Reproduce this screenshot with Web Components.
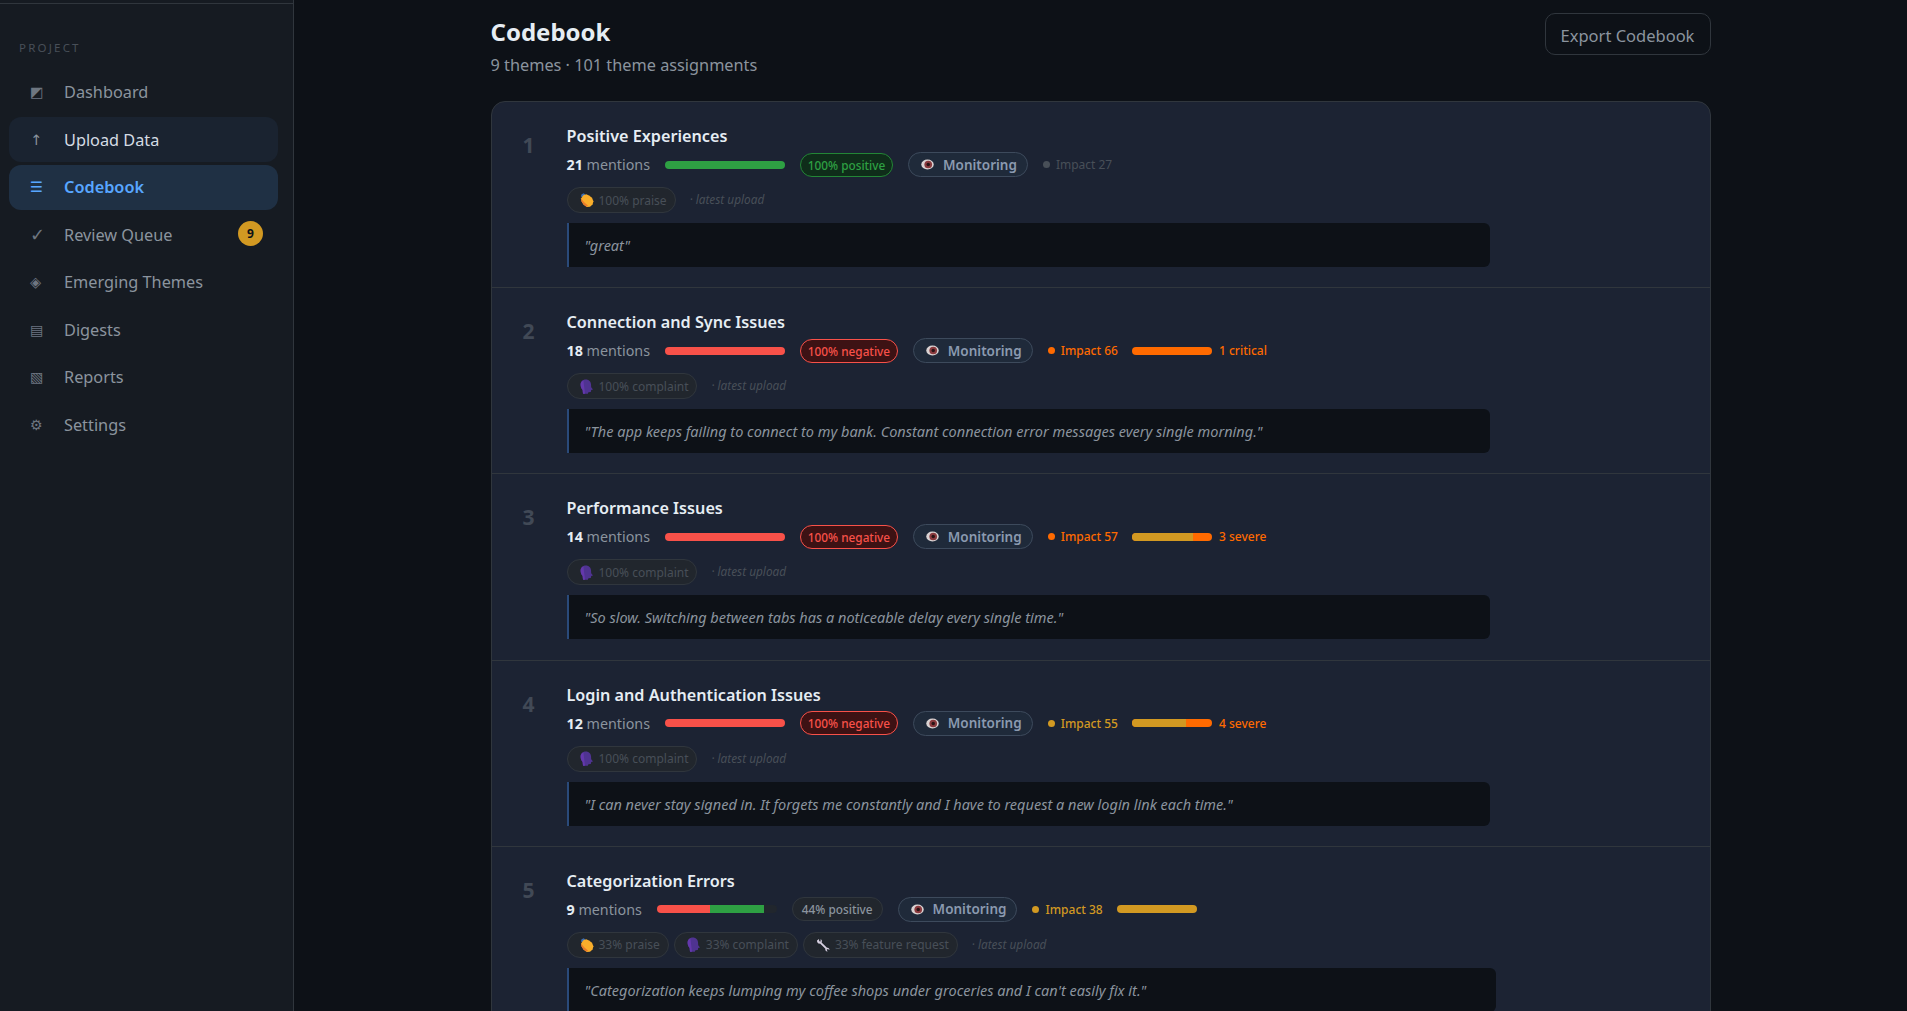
<!DOCTYPE html>
<html lang="en">
<head>
<meta charset="utf-8">
<title>Codebook</title>
<style>
    html, body { height: 100%; margin: 0; overflow: hidden; background: #0d1117; }
    body { font-family: "Noto Sans", "Open Sans", sans-serif; color: #e6edf3; }
</style>
</head>
<body>
<app-shell>
    <side-nav slot="nav">
        <nav-item glyph="◩">Dashboard</nav-item>
        <nav-item glyph="↑" state="hover">Upload Data</nav-item>
        <nav-item glyph="☰" state="active">Codebook</nav-item>
        <nav-item glyph="✓" badge="9">Review Queue</nav-item>
        <nav-item glyph="◈">Emerging Themes</nav-item>
        <nav-item glyph="▤">Digests</nav-item>
        <nav-item glyph="▧">Reports</nav-item>
        <nav-item glyph="⚙">Settings</nav-item>
    </side-nav>

    <page-head heading="Codebook" sub="9 themes · 101 theme assignments" action="Export Codebook"></page-head>

    <theme-list>
        <theme-row rank="1" heading="Positive Experiences" quote="&quot;great&quot;">
            <mention-bar slot="meta" count="21" pos="100"></mention-bar>
            <tone-pill slot="meta" tone="positive">100% positive</tone-pill>
            <monitor-pill slot="meta"></monitor-pill>
            <impact-meter slot="meta" score="27" level="low"></impact-meter>
            <kind-chip slot="chips" icon="clap">100% praise</kind-chip>
        </theme-row>
        <theme-row rank="2" heading="Connection and Sync Issues" quote="&quot;The app keeps failing to connect to my bank. Constant connection error messages every single morning.&quot;">
            <mention-bar slot="meta" count="18" neg="100"></mention-bar>
            <tone-pill slot="meta" tone="negative">100% negative</tone-pill>
            <monitor-pill slot="meta"></monitor-pill>
            <impact-meter slot="meta" score="66" level="high" amber="0" note="1 critical"></impact-meter>
            <kind-chip slot="chips" icon="speak">100% complaint</kind-chip>
        </theme-row>
        <theme-row rank="3" heading="Performance Issues" quote="&quot;So slow. Switching between tabs has a noticeable delay every single time.&quot;">
            <mention-bar slot="meta" count="14" neg="100"></mention-bar>
            <tone-pill slot="meta" tone="negative">100% negative</tone-pill>
            <monitor-pill slot="meta"></monitor-pill>
            <impact-meter slot="meta" score="57" level="high" amber="76" note="3 severe"></impact-meter>
            <kind-chip slot="chips" icon="speak">100% complaint</kind-chip>
        </theme-row>
        <theme-row rank="4" heading="Login and Authentication Issues" quote="&quot;I can never stay signed in. It forgets me constantly and I have to request a new login link each time.&quot;">
            <mention-bar slot="meta" count="12" neg="100"></mention-bar>
            <tone-pill slot="meta" tone="negative">100% negative</tone-pill>
            <monitor-pill slot="meta"></monitor-pill>
            <impact-meter slot="meta" score="55" level="mid" amber="67" note="4 severe"></impact-meter>
            <kind-chip slot="chips" icon="speak">100% complaint</kind-chip>
        </theme-row>
        <theme-row rank="5" heading="Categorization Errors" wide quote="&quot;Categorization keeps lumping my coffee shops under groceries and I can't easily fix it.&quot;">
            <mention-bar slot="meta" count="9" neg="44.5" pos="45"></mention-bar>
            <tone-pill slot="meta" tone="mixed">44% positive</tone-pill>
            <monitor-pill slot="meta"></monitor-pill>
            <impact-meter slot="meta" score="38" level="mid" amber="100"></impact-meter>
            <kind-chip slot="chips" icon="clap">33% praise</kind-chip>
            <kind-chip slot="chips" icon="speak">33% complaint</kind-chip>
            <kind-chip slot="chips" icon="wrench">33% feature request</kind-chip>
        </theme-row>
    </theme-list>
</app-shell>

<script>
// small colour icons used in the pills and chips
const ICONS = {
    clap: `<svg width="14" height="14" viewBox="0 0 14 14">
        <path d="M1.4 1.6 3.6.2 5.4 1.6 2.8 4.6 1 3.6z" fill="#3f6fb0"/>
        <path d="M1 5.4 3.4 2.2 6.2 1.2 9 2.4l3 2.4 1.4 3.4-.8 3.2-2.6 2.4-3.2.2-3.2-2.2L1.6 8.4z" fill="#f9ae2b"/>
        <path d="M6.6 13.8 3.6 11.6 1.6 8.4 1 5.4 4.4 9.4 8 12.4z" fill="#ea7a2c"/>
    </svg>`,
    speak: `<svg width="14" height="15" viewBox="0 0 14 15">
        <path d="M.6 5.4C.6 2.2 3.2.4 6 .4c2.8 0 4.8 2.2 5 4.6l.2 3.2 1.8 2.2-1.8.6-.4 2-2.4.2-.6 1.6H3L2.6 11C1.2 9.4.6 7.6.6 5.4z" fill="#4f3391"/>
        <path d="M3 14.8 2.6 11C1.2 9.4.6 7.6.6 5.4.6 3.6 1.6 2 3.4 1.2L5 14.8z" fill="#6438ac"/>
    </svg>`,
    wrench: `<svg width="14" height="14" viewBox="0 0 14 14">
        <path d="M1 2.4 3 1 3.2 3.2 4.6 3.4 4.6 1.2C6 1.6 6.2 3.2 5.6 4.4L11 9.8C12.4 9.4 13.6 10.4 13.4 12L11.8 11 10.6 11.8 11.6 13.4C10 13.6 8.8 12.2 9.4 10.8L4 5.6C2.4 6 .8 4.4 1 2.4z" fill="#d6cfe0"/>
    </svg>`,
    eye: `<svg width="13" height="11" viewBox="0 0 14 12">
        <ellipse cx="7" cy="6" rx="6.8" ry="5.4" fill="#d9d2d2"/>
        <circle cx="7.8" cy="6" r="4.2" fill="#8a3a3e"/>
        <circle cx="7.8" cy="6" r="1.9" fill="#2a1416"/>
    </svg>`
};

const shellTemplate = document.createElement('template');
shellTemplate.innerHTML = `
    <style>
        :host { display: flex; height: 100%; }
        #main { flex: 1; min-width: 0; overflow: hidden; display: flex; flex-direction: column; align-items: center; }
        #column { width: 1220px; }
    </style>
    <slot name="nav"></slot>
    <div id="main"><div id="column"><slot></slot></div></div>
`;

class AppShell extends HTMLElement {
    constructor() {
        super();
        this.attachShadow({ mode: 'open' });
        this.shadowRoot.appendChild(shellTemplate.content.cloneNode(true));
    }
}

const sideTemplate = document.createElement('template');
sideTemplate.innerHTML = `
    <style>
        :host {
            display: block;
            flex: none;
            width: 293px;
            height: 100%;
            background: #161b22;
            border-right: 1px solid #30363d;
        }
        #top { height: 3px; border-bottom: 1px solid #30363d; }
        #label {
            margin: 35.5px 0 14px 19px;
            font-size: 11.5px;
            line-height: 16px;
            letter-spacing: 2.2px;
            color: #484f58;
        }
        #items { padding: 0 15px 0 9px; display: flex; flex-direction: column; gap: 2.5px; }
    </style>
    <div id="top"></div>
    <div id="label">PROJECT</div>
    <div id="items"><slot></slot></div>
`;

class SideNav extends HTMLElement {
    constructor() {
        super();
        this.attachShadow({ mode: 'open' });
        this.shadowRoot.appendChild(sideTemplate.content.cloneNode(true));
    }
}

const navTemplate = document.createElement('template');
navTemplate.innerHTML = `
    <style>
        :host {
            display: flex;
            align-items: center;
            height: 45px;
            padding: 0 15px 0 21px;
            border-radius: 12px;
            font-size: 16.3px;
            color: #8b949e;
        }
        :host([state="hover"]) { background: #1a2330; color: #d5dce4; }
        :host([state="active"]) { background: #1f3044; color: #58a6ff; font-weight: 600; }
        #glyph { width: 34px; flex: none; font-family: "DejaVu Sans", sans-serif; font-size: 14.5px; color: #6e7681; }
        :host([glyph="✓"]) #glyph { font-size: 18px; }
        :host([state="hover"]) #glyph { color: #8b949e; }
        :host([state="active"]) #glyph { color: #58a6ff; }
        #text { flex: 1; }
        #badge {
            width: 25px;
            height: 25px;
            border-radius: 50%;
            background: #d29922;
            color: #0d1117;
            font-size: 12px;
            font-weight: 700;
            display: flex;
            align-items: center;
            justify-content: center;
            margin-top: -2px;
        }
    </style>
    <span id="glyph"></span>
    <span id="text"><slot></slot></span>
`;

class NavItem extends HTMLElement {
    constructor() {
        super();
        this.attachShadow({ mode: 'open' });
        this.shadowRoot.appendChild(navTemplate.content.cloneNode(true));
        this.shadowRoot.querySelector('#glyph').textContent = this.getAttribute('glyph');
        if (this.hasAttribute('badge')) {
            const badge = document.createElement('span');
            badge.id = 'badge';
            badge.textContent = this.getAttribute('badge');
            this.shadowRoot.appendChild(badge);
        }
    }
}

const headTemplate = document.createElement('template');
headTemplate.innerHTML = `
    <style>
        :host {
            display: flex;
            justify-content: space-between;
            align-items: flex-start;
            padding-top: 13px;
            margin-bottom: 23px;
        }
        h1 { margin: 0; font-size: 24px; line-height: 38px; font-weight: 700; color: #e6edf3; }
        p { margin: 1px 0 0; font-size: 16.3px; line-height: 26px; color: #8b949e; }
        button {
            height: 42px;
            width: 166px;
            padding: 2px 0 0;
            border: 1px solid #30363d;
            border-radius: 10px;
            background: transparent;
            color: #8b949e;
            font: 16.5px "Noto Sans", sans-serif;
        }
    </style>
    <div>
        <h1></h1>
        <p></p>
    </div>
    <button></button>
`;

class PageHead extends HTMLElement {
    constructor() {
        super();
        this.attachShadow({ mode: 'open' });
        this.shadowRoot.appendChild(headTemplate.content.cloneNode(true));
        this.shadowRoot.querySelector('h1').innerText = this.getAttribute('heading');
        this.shadowRoot.querySelector('p').innerText = this.getAttribute('sub');
        this.shadowRoot.querySelector('button').innerText = this.getAttribute('action');
    }
}

const listTemplate = document.createElement('template');
listTemplate.innerHTML = `
    <style>
        :host {
            display: block;
            background: #1c2333;
            border: 1px solid #30363d;
            border-radius: 14px;
            overflow: hidden;
        }
    </style>
    <slot></slot>
`;

class ThemeList extends HTMLElement {
    constructor() {
        super();
        this.attachShadow({ mode: 'open' });
        this.shadowRoot.appendChild(listTemplate.content.cloneNode(true));
    }
}

const rowTemplate = document.createElement('template');
rowTemplate.innerHTML = `
    <style>
        :host {
            display: flex;
            height: 186.2px;
            box-sizing: border-box;
            padding: 21px 0 0 18px;
            border-bottom: 1px solid #30363d;
        }
        #rank {
            flex: none;
            width: 38px;
            margin: 7px 19px 0 0;
            text-align: center;
            font-size: 21px;
            line-height: 30px;
            font-weight: 700;
            color: #414956;
        }
        #body { flex: 1; min-width: 0; }
        h3 { margin: 0 0 3px; font-size: 16.2px; line-height: 26px; font-weight: 600; color: #e6edf3; }
        #meta { display: flex; align-items: center; gap: 15px; height: 25px; margin-bottom: 10px; }
        #chips { display: flex; align-items: center; gap: 5px; height: 26px; margin-bottom: 10px; }
        #latest { margin-left: 9px; font-size: 11.8px; font-style: italic; color: #484f58; position: relative; top: -1px; }
        blockquote {
            box-sizing: border-box;
            width: 923px;
            height: 44px;
            margin: 0;
            padding: 0 16px;
            display: flex;
            align-items: center;
            background: #0d1117;
            border-left: 2px solid #2a4a7a;
            border-radius: 0 6px 6px 0;
            font-size: 14.5px;
            font-style: italic;
            color: #8b949e;
        }
        :host([wide]) blockquote { width: 929px; }
    </style>
    <div id="rank"></div>
    <div id="body">
        <h3></h3>
        <div id="meta"><slot name="meta"></slot></div>
        <div id="chips"><slot name="chips"></slot><span id="latest">· latest upload</span></div>
        <blockquote></blockquote>
    </div>
`;

class ThemeRow extends HTMLElement {
    constructor() {
        super();
        this.attachShadow({ mode: 'open' });
        this.shadowRoot.appendChild(rowTemplate.content.cloneNode(true));
        this.shadowRoot.querySelector('#rank').textContent = this.getAttribute('rank');
        this.shadowRoot.querySelector('h3').textContent = this.getAttribute('heading');
        this.shadowRoot.querySelector('blockquote').textContent = this.getAttribute('quote');
    }
}

const barTemplate = document.createElement('template');
barTemplate.innerHTML = `
    <style>
        :host { display: flex; align-items: center; gap: 15px; font-size: 14.3px; color: #8b949e; }
        b { color: #e6edf3; font-weight: 700; }
        #track { display: flex; width: 120px; height: 8px; border-radius: 4px; overflow: hidden; background: #21262d; }
        #neg { background: #f85149; }
        #pos { background: #2ea043; }
    </style>
    <span><b></b> mentions</span>
    <div id="track"><div id="neg"></div><div id="pos"></div></div>
`;

class MentionBar extends HTMLElement {
    constructor() {
        super();
        this.attachShadow({ mode: 'open' });
        this.shadowRoot.appendChild(barTemplate.content.cloneNode(true));
        this.shadowRoot.querySelector('b').textContent = this.getAttribute('count');
        this.shadowRoot.querySelector('#neg').style.width = (this.getAttribute('neg') || 0) + '%';
        this.shadowRoot.querySelector('#pos').style.width = (this.getAttribute('pos') || 0) + '%';
    }
}

const toneTemplate = document.createElement('template');
toneTemplate.innerHTML = `
    <style>
        :host {
            display: flex;
            align-items: center;
            box-sizing: border-box;
            height: 24px;
            padding: 0 6.75px;
            border: 1px solid;
            border-radius: 12px;
            font-size: 11.8px;
            font-weight: 500;
        }
        :host([tone="positive"]) { background: #0f2d1a; border-color: #238636; color: #2ea043; }
        :host([tone="negative"]) { background: #3d1214; border-color: #f85149; color: #f85149; }
        :host([tone="mixed"]) { padding: 0 9px; background: #21262d; border-color: #30363d; color: #8b949e; }
    </style>
    <slot></slot>
`;

class TonePill extends HTMLElement {
    constructor() {
        super();
        this.attachShadow({ mode: 'open' });
        this.shadowRoot.appendChild(toneTemplate.content.cloneNode(true));
    }
}

const monitorTemplate = document.createElement('template');
monitorTemplate.innerHTML = `
    <style>
        :host {
            display: flex;
            align-items: center;
            gap: 9px;
            box-sizing: border-box;
            height: 25px;
            padding: 0 10px 0 12px;
            background: #1f2a3a;
            border: 1px solid #3d4a5c;
            border-radius: 13px;
            font-size: 13.5px;
            font-weight: 600;
            color: #8b9ab0;
        }
        svg { display: block; }
    </style>
    ${ICONS.eye}
    <span>Monitoring</span>
`;

class MonitorPill extends HTMLElement {
    constructor() {
        super();
        this.attachShadow({ mode: 'open' });
        this.shadowRoot.appendChild(monitorTemplate.content.cloneNode(true));
    }
}

const impactTemplate = document.createElement('template');
impactTemplate.innerHTML = `
    <style>
        :host { display: flex; align-items: center; font-size: 12px; font-weight: 500; color: var(--c); }
        :host([level="low"]) { --c: #484f58; font-weight: 400; }
        :host([level="mid"]) { --c: #d29922; }
        :host([level="high"]) { --c: #ff6a00; }
        #dot { width: 7px; height: 7px; border-radius: 50%; background: var(--c); margin-right: 6px; }
        #track { display: flex; width: 80px; height: 8px; margin-left: 14px; border-radius: 4px; overflow: hidden; background: #ff6a00; }
        #amber { background: #d29922; }
        #note { margin-left: 7px; color: #ff6a00; }
    </style>
    <span id="dot"></span>
    <span id="score"></span>
`;

class ImpactMeter extends HTMLElement {
    constructor() {
        super();
        this.attachShadow({ mode: 'open' });
        this.shadowRoot.appendChild(impactTemplate.content.cloneNode(true));
        this.shadowRoot.querySelector('#score').textContent = 'Impact ' + this.getAttribute('score');
        if (this.hasAttribute('amber')) {
            const track = document.createElement('div');
            track.id = 'track';
            track.innerHTML = '<div id="amber" style="width:' + this.getAttribute('amber') + '%"></div>';
            this.shadowRoot.appendChild(track);
        }
        if (this.hasAttribute('note')) {
            const note = document.createElement('span');
            note.id = 'note';
            note.textContent = this.getAttribute('note');
            this.shadowRoot.appendChild(note);
        }
    }
}

const chipTemplate = document.createElement('template');
chipTemplate.innerHTML = `
    <style>
        :host {
            display: flex;
            align-items: center;
            gap: 5px;
            box-sizing: border-box;
            height: 26px;
            padding: 0 8px 0 12px;
            background: #21262d;
            border: 1px solid #30363d;
            border-radius: 13px;
            font-size: 12px;
            color: #484f58;
        }
        #icon { display: flex; }
    </style>
    <span id="icon"></span>
    <slot></slot>
`;

class KindChip extends HTMLElement {
    constructor() {
        super();
        this.attachShadow({ mode: 'open' });
        this.shadowRoot.appendChild(chipTemplate.content.cloneNode(true));
        this.shadowRoot.querySelector('#icon').innerHTML = ICONS[this.getAttribute('icon')];
    }
}

window.customElements.define('app-shell', AppShell);
window.customElements.define('side-nav', SideNav);
window.customElements.define('nav-item', NavItem);
window.customElements.define('page-head', PageHead);
window.customElements.define('theme-list', ThemeList);
window.customElements.define('theme-row', ThemeRow);
window.customElements.define('mention-bar', MentionBar);
window.customElements.define('tone-pill', TonePill);
window.customElements.define('monitor-pill', MonitorPill);
window.customElements.define('impact-meter', ImpactMeter);
window.customElements.define('kind-chip', KindChip);
</script>
</body>
</html>
